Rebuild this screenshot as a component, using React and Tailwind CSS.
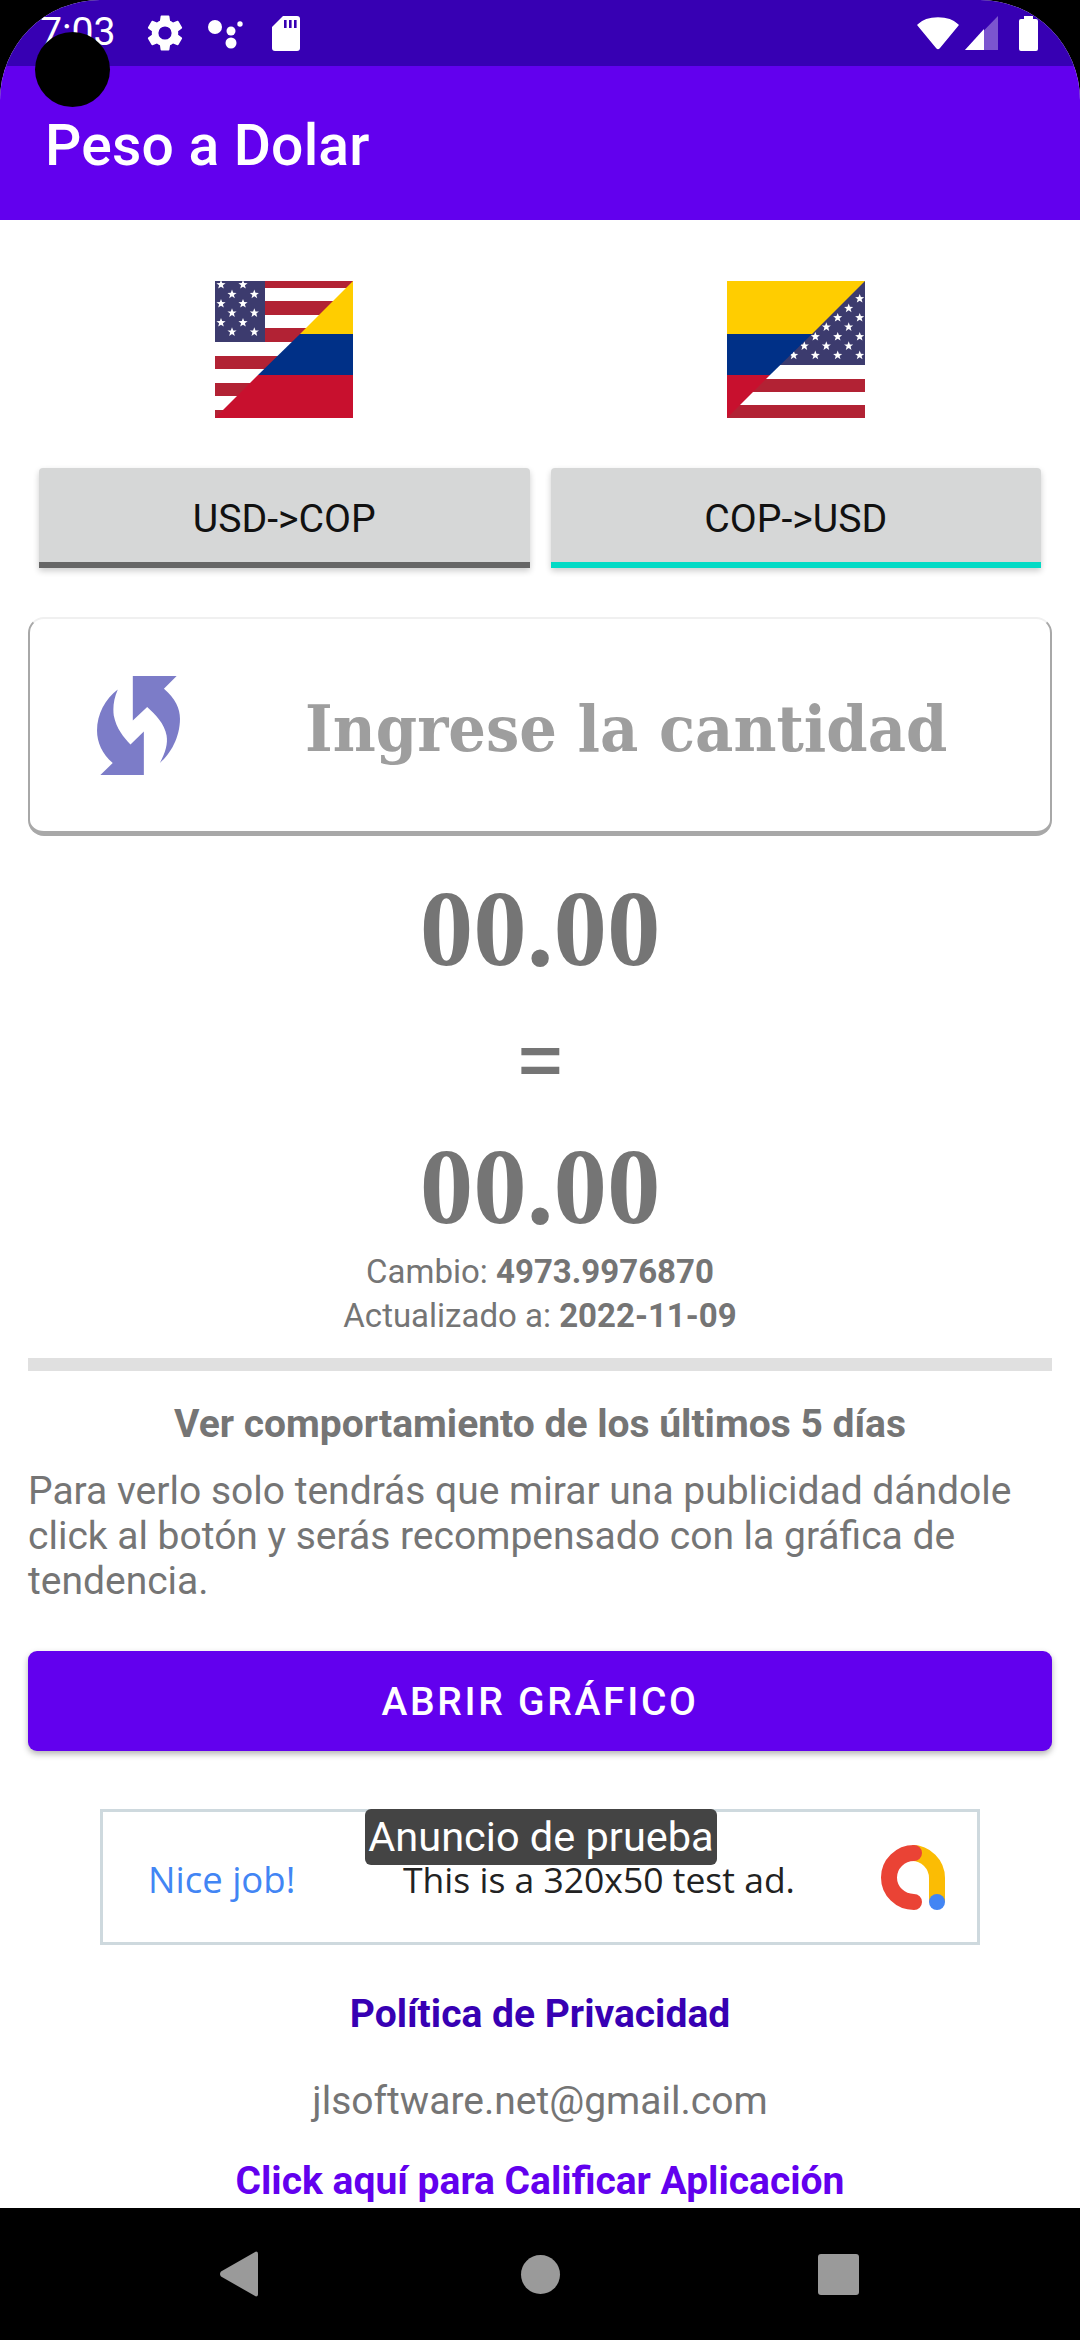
const stripes1 = [[0, 7], [20, 14], [47, 14], [75, 13], [102, 13], [129, 8]]
const stars1 = [[92, 76], [158, 76], [125, 105], [192, 105], [92, 133], [158, 133], [125, 161], [192, 161], [92, 190], [158, 190], [125, 218], [192, 218]]
const stars2 = [[478, 118], [445, 147], [412, 175], [478, 175], [378, 203], [445, 203], [345, 232], [412, 232], [478, 232], [312, 260], [378, 260], [445, 260], [280, 288], [345, 288], [412, 288], [478, 288]]

function starPoints(cx, cy, r) {
  const pts = []
  for (let i = 0; i < 10; i++) {
    const a = -Math.PI / 2 + (i * Math.PI) / 5
    const rad = i % 2 === 0 ? r : r * 0.42
    pts.push(`${(cx + Math.cos(a) * rad).toFixed(1)},${(cy + Math.sin(a) * rad).toFixed(1)}`)
  }
  return pts.join(' ')
}

function FlagUsCo() {
  return (
    <svg viewBox="0 0 138 137" className="w-[138px] h-[137px]">
      <rect width="138" height="137" fill="#ffffff" />
      {stripes1.map(([y, h]) => <rect key={y} y={y} width="138" height={h} fill="#b22234" />)}
      <rect width="50" height="61" fill="#3c3b6e" />
      {stars1.map(([x, y]) => <polygon key={`${x}-${y}`} points={starPoints((x - 74) / 3, (y - 65) / 3, 4.8)} fill="#ffffff" />)}
      <polygon points="138,0 138,53 85,53" fill="#ffcd00" />
      <polygon points="85,53 138,53 138,94 43,94" fill="#003087" />
      <polygon points="43,94 138,94 138,137 0,137" fill="#c8102e" />
    </svg>
  )
}

function FlagCoUs() {
  return (
    <svg viewBox="0 0 138 137" className="w-[138px] h-[137px]">
      <rect width="138" height="137" fill="#ffffff" />
      <rect y="98" width="138" height="13" fill="#b22234" />
      <rect y="124" width="138" height="13" fill="#b22234" />
      <rect width="138" height="84" fill="#3c3b6e" />
      {stars2.map(([x, y]) => <polygon key={`${x}-${y}`} points={starPoints((x - 80) / 3, (y - 65) / 3, 4.8)} fill="#ffffff" />)}
      <polygon points="0,0 138,0 85,53 0,53" fill="#ffcd00" />
      <polygon points="0,53 85,53 43,94 0,94" fill="#003087" />
      <polygon points="0,94 43,94 0,137" fill="#c8102e" />
    </svg>
  )
}

function SyncIcon() {
  return (
    <svg viewBox="50 52 248 296" className="w-[83px] h-[99px] shrink-0" fill="#7c7cc8">
      <path d="M157 52H288L250 90C285 120 298 150 298 180C298 235 270 285 238 312C255 280 262 255 258 230C252 195 225 168 200 145L157 185Z" />
      <path d="M190 348H60L97 312C65 285 50 250 50 215C50 165 75 120 112 92C100 120 97 145 100 170C108 210 130 235 150 257L190 218Z" />
    </svg>
  )
}

function AdLogo() {
  return (
    <svg viewBox="0 0 66 65" className="w-[66px] h-[65px] -mt-[3px]" fill="none">
      <path d="M33 8A25 25 0 0 1 58 33V57" stroke="#fbbc04" strokeWidth="16" />
      <path d="M35 8A25 24.5 0 1 0 35 57" stroke="#ea4335" strokeWidth="16" strokeLinecap="round" />
      <circle cx="58" cy="57" r="8" fill="#4285f4" />
    </svg>
  )
}

function StatusBar() {
  return (
    <div className="h-[66px] bg-[#3700b3] flex items-center pl-[40px] pr-[42px] shrink-0 text-white">
      <span className="text-[39.2px] leading-none w-[103px]">7:03</span>
      <svg viewBox="0 0 24 24" className="w-[44px] h-[44px]" fill="#fff">
        <path d="M19.14 12.94c.04-.3.06-.61.06-.94s-.02-.64-.07-.94l2.03-1.58a.49.49 0 0 0 .12-.61l-1.92-3.32a.49.49 0 0 0-.59-.22l-2.39.96a7 7 0 0 0-1.62-.94l-.36-2.54a.48.48 0 0 0-.48-.41h-3.84a.47.47 0 0 0-.47.41l-.36 2.54c-.59.24-1.13.57-1.62.94l-2.39-.96a.48.48 0 0 0-.59.22L2.74 8.87a.47.47 0 0 0 .12.61l2.03 1.58c-.05.3-.09.63-.09.94s.02.64.07.94l-2.03 1.58a.49.49 0 0 0-.12.61l1.92 3.32c.12.22.37.29.59.22l2.39-.96c.5.38 1.03.7 1.62.94l.36 2.54c.05.24.24.41.48.41h3.84c.24 0 .44-.17.47-.41l.36-2.54c.59-.24 1.13-.56 1.62-.94l2.39.96c.22.08.47 0 .59-.22l1.92-3.32a.47.47 0 0 0-.12-.61l-2.01-1.58zM12 15.6A3.6 3.6 0 1 1 12 8.4a3.6 3.6 0 0 1 0 7.2z" />
      </svg>
      <svg viewBox="0 0 36 34" className="w-[36px] h-[34px] ml-[21px]" fill="#fff">
        <circle cx="7" cy="11" r="7" />
        <circle cx="23" cy="15" r="4.5" />
        <circle cx="23" cy="27" r="5.5" />
        <circle cx="32" cy="8" r="2.7" />
      </svg>
      <svg viewBox="0 0 28 35" className="w-[28px] h-[35px] ml-[28px]" fill="#fff">
        <path d="M11 0H25a3 3 0 0 1 3 3V32a3 3 0 0 1-3 3H3a3 3 0 0 1-3-3V11Z" />
        <rect x="12" y="4" width="2.6" height="8" fill="#3700b3" />
        <rect x="17" y="4" width="2.6" height="8" fill="#3700b3" />
        <rect x="22" y="4" width="2.6" height="8" fill="#3700b3" />
      </svg>
      <div className="flex-1" />
      <svg viewBox="0 0 42 33" className="w-[42px] h-[33px]" fill="#fff">
        <path d="M1 8C6 3 13 1 21 1S36 3 41 8L22 31Q21 32 20 31Z" stroke="#fff" strokeWidth="1.5" strokeLinejoin="round" />
      </svg>
      <svg viewBox="0 0 33 34" className="w-[33px] h-[34px] ml-[6px]">
        <polygon points="33,0 33,34 0,34" fill="#7b55cf" />
        <polygon points="19,13 19,34 0,34" fill="#fff" />
      </svg>
      <svg viewBox="0 0 19 35" className="w-[19px] h-[35px] ml-[21px]" fill="#fff">
        <path d="M5 0H14V3H17a2 2 0 0 1 2 2V33a2 2 0 0 1-2 2H2a2 2 0 0 1-2-2V5a2 2 0 0 1 2-2H5Z" />
      </svg>
    </div>
  )
}

export default function App() {
  return (
    <div className="relative h-[2340px] w-[1080px] bg-black overflow-hidden flex flex-col font-['Roboto',sans-serif]">
      <div className="flex-1 min-h-0 flex flex-col rounded-t-[100px] overflow-hidden bg-white">
        <StatusBar />
        <div className="h-[154px] bg-[#6200ee] shrink-0 flex items-center pl-[45px] pt-[4px]">
          <span className="text-white text-[57px] font-medium leading-none tracking-[0.2px]">Peso a Dolar</span>
        </div>

        <div className="flex-1 min-h-0 overflow-hidden">
          <div className="flex justify-between pl-[215px] pr-[215px] pt-[61px]">
            <FlagUsCo />
            <FlagCoUs />
          </div>

          <div className="grid grid-cols-2 gap-[21px] pl-[39px] pr-[39px] mt-[50px]">
            <button className="h-[100px] bg-[#d6d7d7] rounded-t-[4px] border-b-[6px] border-[#666666] shadow-[0_3px_6px_rgba(0,0,0,0.2)] text-[39.2px] text-[#111111] pt-[9px]">USD-&gt;COP</button>
            <button className="h-[100px] bg-[#d6d7d7] rounded-t-[4px] border-b-[6px] border-[#03dac5] shadow-[0_3px_6px_rgba(0,0,0,0.2)] text-[39.2px] text-[#111111] pt-[9px]">COP-&gt;USD</button>
          </div>

          <div className="mx-[28px] mt-[49px] h-[219px] rounded-[16px] border-x-[2px] border-t-[2px] border-b-[5px] border-[#a8a8a8] border-t-[#f0f0f0] flex items-center pl-[67px]">
            <SyncIcon />
            <span className="inline-block origin-left scale-x-[0.925] mt-[8px] ml-[125px] text-[64px] leading-none font-bold text-[#9e9e9e] font-['DejaVu_Serif',serif] whitespace-nowrap">Ingrese la cantidad</span>
          </div>

          <div className="flex flex-col items-center text-[#757575]">
            <div className="mt-[45px] h-[96px] flex items-center text-[107px] leading-none font-bold font-['Liberation_Serif',serif]">00.00</div>
            <div className="mt-[48px] h-[70px] flex items-center text-[93px] leading-none">=</div>
            <div className="mt-[44px] h-[96px] flex items-center text-[107px] leading-none font-bold font-['Liberation_Serif',serif]">00.00</div>
            <div className="mt-[15px] text-[33px] leading-[44px]">Cambio: <b>4973.9976870</b></div>
            <div className="text-[33px] leading-[44px]">Actualizado a: <b>2022-11-09</b></div>
          </div>

          <div className="mx-[28px] mt-[20px] h-[13px] bg-[#e0e0e0]" />

          <div className="mt-[31px] text-center text-[39px] leading-[44px] font-bold text-[#757575]">Ver comportamiento de los últimos 5 días</div>
          <p className="mx-[28px] mt-[23px] text-[39px] leading-[45px] text-[#757575]">Para verlo solo tendrás que mirar una publicidad dándole click al botón y serás recompensado con la gráfica de tendencia.</p>

          <button className="block mx-[28px] mt-[47px] w-[1024px] h-[100px] bg-[#6200ee] rounded-[9px] shadow-[0_3px_6px_rgba(0,0,0,0.3)] text-white text-[39px] font-medium tracking-[2.7px] pt-[2px]">ABRIR GRÁFICO</button>

          <div className="relative mx-[100px] mt-[58px] h-[136px] border-[3px] border-[#ced9de] flex items-center pl-[45px] pr-[32px] pt-[4px]">
            <span className="text-[#4285f4] text-[36.5px] leading-none w-[255px] font-['Open_Sans',sans-serif]">Nice job!</span>
            <span className="text-[#222222] text-[35.5px] leading-none font-['Open_Sans',sans-serif] mt-[2px]">This is a 320x50 test ad.</span>
            <div className="flex-1" />
            <AdLogo />
            <div className="absolute top-[-3px] left-[262px] w-[352px] h-[56px] bg-[#444444] rounded-[6px] text-white text-[41.5px] leading-[56px] text-center whitespace-nowrap">Anuncio de prueba</div>
          </div>

          <div className="mt-[47px] text-center text-[39px] leading-[44px] font-bold text-[#3700b3]">Política de Privacidad</div>
          <div className="mt-[43px] text-center text-[39px] leading-[44px] text-[#757575]">jlsoftware.net@gmail.com</div>
          <div className="mt-[36px] text-center text-[39px] leading-[44px] font-bold text-[#6200ee]">Click aquí para Calificar Aplicación</div>
        </div>
      </div>

      <div className="h-[132px] shrink-0 bg-black flex items-center">
        <svg viewBox="0 0 38 46" className="w-[38px] h-[46px] ml-[220px]" fill="#9a9a9a">
          <path d="M36 0.5a2 2 0 0 1 2 2V43.5a2 2 0 0 1-2 2L1 25.5a4 4 0 0 1 0-5Z" />
        </svg>
        <div className="w-[39px] h-[39px] rounded-full bg-[#9a9a9a] ml-[263px]" />
        <div className="w-[41px] h-[41px] rounded-[3px] bg-[#9a9a9a] ml-[258px]" />
      </div>

      <div className="absolute left-[35px] top-[32px] w-[75px] h-[75px] rounded-full bg-black" />
    </div>
  )
}
